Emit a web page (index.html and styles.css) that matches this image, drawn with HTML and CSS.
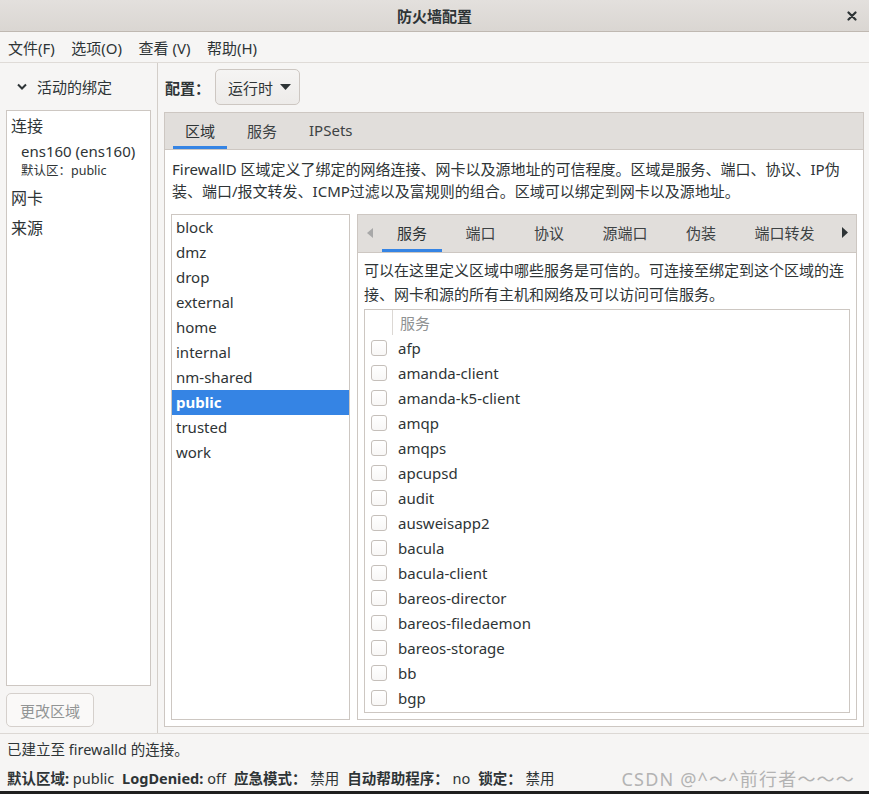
FILE: index.html
```html
<!DOCTYPE html>
<html lang="zh-CN">
<head>
<meta charset="utf-8">
<title>防火墙配置</title>
<link rel="stylesheet" href="styles.css">
</head>
<body>
<div class="window">
  <header class="titlebar">
    <div class="tb-spacer"></div>
    <div class="title">防火墙配置</div>
    <div class="close"><svg width="10" height="10" viewBox="0 0 10 10"><path d="M1.5 1.5 L8.5 8.5 M8.5 1.5 L1.5 8.5" stroke="#2e3436" stroke-width="2.2" stroke-linecap="round"/></svg></div>
  </header>
  <nav class="menubar">
    <span>文件(F)</span><span>选项(O)</span><span>查看 (V)</span><span>帮助(H)</span>
  </nav>
  <main class="main">
    <aside class="left">
      <div class="bind-head">
        <svg width="10" height="7" viewBox="0 0 10 7"><path d="M1 1.5 L5 5.5 L9 1.5" fill="none" stroke="#2e3436" stroke-width="2"/></svg>
        <span>活动的绑定</span>
      </div>
      <div class="bind-list">
        <div class="bl-cat">连接</div>
        <div class="bl-item">ens160 (ens160)</div>
        <div class="bl-sub">默认区：public</div>
        <div class="bl-cat">网卡</div>
        <div class="bl-cat">来源</div>
      </div>
      <button class="btn-disabled">更改区域</button>
    </aside>
    <section class="right">
      <div class="config-row">
        <span class="config-label">配置：</span>
        <button class="combo"><span>运行时</span><svg width="11" height="6" viewBox="0 0 11 6"><path d="M0 0 H11 L5.5 6 Z" fill="#2e3436"/></svg></button>
      </div>
      <div class="notebook outer">
        <div class="tabs">
          <div class="tab active">区域</div>
          <div class="tab">服务</div>
          <div class="tab">IPSets</div>
        </div>
        <div class="nb-body">
          <p class="desc">FirewallD 区域定义了绑定的网络连接、网卡以及源地址的可信程度。区域是服务、端口、协议、IP伪<br>装、端口/报文转发、ICMP过滤以及富规则的组合。区域可以绑定到网卡以及源地址。</p>
          <div class="panes">
            <ul class="zones">
              <li>block</li>
              <li>dmz</li>
              <li>drop</li>
              <li>external</li>
              <li>home</li>
              <li>internal</li>
              <li>nm-shared</li>
              <li class="sel">public</li>
              <li>trusted</li>
              <li>work</li>
            </ul>
            <div class="notebook inner">
              <div class="itabs">
                <span class="arrow"><svg width="6" height="10" viewBox="0 0 6 10"><path d="M6 0 V10 L0 5 Z" fill="#a8a8a8"/></svg></span>
                <div class="tab-strip">
                  <div class="itab active">服务</div>
                  <div class="itab">端口</div>
                  <div class="itab">协议</div>
                  <div class="itab">源端口</div>
                  <div class="itab">伪装</div>
                  <div class="itab">端口转发</div>
                </div>
                <span class="arrow"><svg width="6" height="11" viewBox="0 0 6 11"><path d="M0 0 V11 L6 5.5 Z" fill="#2e3436"/></svg></span>
              </div>
              <div class="inner-body">
                <p class="desc2">可以在这里定义区域中哪些服务是可信的。可连接至绑定到这个区域的连<br>接、网卡和源的所有主机和网络及可以访问可信服务。</p>
                <div class="tree">
                  <div class="tree-head"><span class="th-check"></span><span class="th-name">服务</span></div>
                  <div class="row"><span class="cb"></span><span>afp</span></div>
                  <div class="row"><span class="cb"></span><span>amanda-client</span></div>
                  <div class="row"><span class="cb"></span><span>amanda-k5-client</span></div>
                  <div class="row"><span class="cb"></span><span>amqp</span></div>
                  <div class="row"><span class="cb"></span><span>amqps</span></div>
                  <div class="row"><span class="cb"></span><span>apcupsd</span></div>
                  <div class="row"><span class="cb"></span><span>audit</span></div>
                  <div class="row"><span class="cb"></span><span>ausweisapp2</span></div>
                  <div class="row"><span class="cb"></span><span>bacula</span></div>
                  <div class="row"><span class="cb"></span><span>bacula-client</span></div>
                  <div class="row"><span class="cb"></span><span>bareos-director</span></div>
                  <div class="row"><span class="cb"></span><span>bareos-filedaemon</span></div>
                  <div class="row"><span class="cb"></span><span>bareos-storage</span></div>
                  <div class="row"><span class="cb"></span><span>bb</span></div>
                  <div class="row"><span class="cb"></span><span>bgp</span></div>
                </div>
              </div>
            </div>
          </div>
        </div>
      </div>
    </section>
  </main>
  <footer class="status">
    <div class="status-1">已建立至 firewalld 的连接。</div>
    <div class="status-2">
      <span class="kv"><b>默认区域:</b> public</span>
      <span class="kv"><b>LogDenied:</b> off</span>
      <span class="kv"><b>应急模式：</b> 禁用</span>
      <span class="kv"><b>自动帮助程序：</b> no</span>
      <span class="kv"><b>锁定：</b> 禁用</span>
      <span class="watermark">CSDN @^～^前行者～～～</span>
    </div>
  </footer>
  <div class="screen-edge"></div>
</div>
</body>
</html>
```

FILE: styles.css
```css
* { box-sizing: border-box; margin: 0; padding: 0; }

html, body {
  width: 869px;
  height: 794px;
  overflow: hidden;
}

body {
  font-family: "Noto Sans", "Noto Sans CJK SC", sans-serif;
  font-size: 15px;
  color: #2e3436;
  background: #f6f5f4;
}

.window {
  display: flex;
  flex-direction: column;
  height: 794px;
}

/* title bar */
.titlebar {
  flex: none;
  height: 32px;
  display: grid;
  grid-template-columns: 1fr auto 1fr;
  align-items: center;
  background: linear-gradient(#e3e0dd, #dad6d2);
  border-bottom: 1px solid #bfb8b1;
}
.title {
  font-weight: bold;
  font-size: 15px;
  line-height: 20px;
}
.close {
  justify-self: end;
  display: flex;
  padding-right: 12px;
}

/* menu */
.menubar {
  flex: none;
  height: 31px;
  display: flex;
  align-items: center;
  gap: 16.5px;
  padding-left: 8px;
  border-bottom: 1px solid #dfdbd7;
  background: #f6f5f4;
}

/* main */
.main {
  flex: none;
  height: 670px;
  display: flex;
}

.left {
  flex: none;
  width: 158px;
  border-right: 1px solid #d3cec9;
  display: flex;
  flex-direction: column;
}
.bind-head {
  height: 47px;
  display: flex;
  align-items: center;
  gap: 10px;
  padding-left: 17px;
  padding-bottom: 1px;
}
.bind-list {
  flex: 1;
  margin: 0 6px;
  background: #fff;
  border: 1px solid #cdc7c2;
  padding-left: 4px;
}
.bl-cat {
  font-size: 16px;
  line-height: 30px;
}
.bl-item {
  padding-left: 10px;
  line-height: 20px;
}
.bl-sub {
  padding-left: 10px;
  font-size: 12.5px;
  line-height: 20px;
  margin-bottom: 2px;
}
.btn-disabled {
  flex: none;
  margin: 7px 6px 6px;
  width: 88px;
  height: 34px;
  border: 1px solid #d5d0cc;
  border-radius: 5px;
  background: #faf9f8;
  color: #929595;
  font-family: inherit;
  font-size: 15px;
}

.right {
  flex: 1;
  min-width: 0;
  padding: 6px 5px 6px 6px;
  display: flex;
  flex-direction: column;
}
.config-row {
  flex: none;
  height: 36px;
  margin-bottom: 7px;
  display: flex;
  align-items: center;
  padding-left: 1px;
}
.config-label {
  font-weight: bold;
}
.combo {
  margin-left: 5px;
  width: 85px;
  height: 36px;
  display: flex;
  align-items: center;
  gap: 7px;
  padding-left: 12px;
  border: 1px solid #cdc7c2;
  border-radius: 5px;
  background: linear-gradient(#f5f4f3, #edebe9);
  color: #2e3436;
  font-family: inherit;
  font-size: 15px;
}

/* notebooks */
.notebook {
  border: 1px solid #cdc7c2;
  background: #fff;
  display: flex;
  flex-direction: column;
}
.outer {
  flex: 1;
}
.tabs {
  flex: none;
  height: 37px;
  display: flex;
  padding-left: 4px;
  background: #e1dedb;
  border-bottom: 1px solid #cdc7c2;
}
.tab {
  display: flex;
  align-items: center;
  padding: 0 12px 2px;
  margin: 0 4px;
  color: #3d4244;
}
.tab.active,
.itab.active {
  color: #2e3436;
  box-shadow: inset 0 -3px #3584e4;
}

.nb-body {
  flex: 1;
  display: flex;
  flex-direction: column;
  padding: 8px 6px 6px 6px;
}
.desc {
  line-height: 22px;
  padding-left: 1px;
  white-space: nowrap;
}
.panes {
  flex: 1;
  display: flex;
  gap: 7px;
  margin-top: 12px;
}
.zones {
  flex: none;
  width: 179px;
  list-style: none;
  background: #fff;
  border: 1px solid #cdc7c2;
}
.zones li {
  height: 25px;
  line-height: 25px;
  padding-left: 4px;
}
.zones li.sel {
  background: #3584e4;
  color: #fff;
  font-weight: bold;
}

.inner {
  flex: 1;
  min-width: 0;
}
.itabs {
  flex: none;
  height: 38px;
  display: flex;
  background: #e1dedb;
  border-bottom: 1px solid #cdc7c2;
}
.arrow {
  flex: none;
  width: 24px;
  display: flex;
  align-items: center;
  justify-content: center;
  padding-bottom: 2px;
}
.itabs .arrow:last-child {
  width: 23px;
}
.tab-strip {
  flex: 1;
  display: flex;
  overflow: hidden;
}
.itab {
  flex: none;
  display: flex;
  align-items: center;
  padding: 0 15px 3px;
  margin-right: 8.5px;
  color: #3d4244;
}

.inner-body {
  flex: 1;
  display: flex;
  flex-direction: column;
  padding: 5px 6px 6px 6px;
}
.desc2 {
  line-height: 24px;
  white-space: nowrap;
}
.tree {
  flex: 1;
  margin-top: 3px;
  border: 1px solid #cdc7c2;
  overflow: hidden;
}
.tree-head {
  height: 25px;
  display: flex;
  align-items: center;
}
.th-check {
  width: 28px;
  height: 25px;
  border-right: 1px solid #dcd8d4;
}
.th-name {
  padding-left: 7px;
  color: #8f9293;
}
.row {
  height: 25px;
  display: flex;
  align-items: center;
  gap: 11px;
  padding-left: 6px;
}
.cb {
  flex: none;
  width: 16px;
  height: 16px;
  border: 1px solid #c5bfba;
  border-radius: 3px;
  background: linear-gradient(#ffffff, #f8f7f6);
}

/* status */
.status {
  flex: none;
  height: 58px;
  border-top: 1px solid #dcd8d4;
  padding-left: 7px;
  font-size: 14.5px;
}
.status-1 {
  height: 30px;
  line-height: 30px;
}
.status-2 {
  height: 27px;
  display: flex;
  align-items: center;
}
.kv {
  margin-right: 8px;
  white-space: nowrap;
}
.kv b {
  font-weight: bold;
}
.watermark {
  margin-left: auto;
  margin-right: 14px;
  font-size: 18px;
  letter-spacing: 1.2px;
  color: #b3b3b3;
  white-space: nowrap;
}
.screen-edge {
  flex: none;
  height: 3px;
  background: #1f1f1f;
}
```
